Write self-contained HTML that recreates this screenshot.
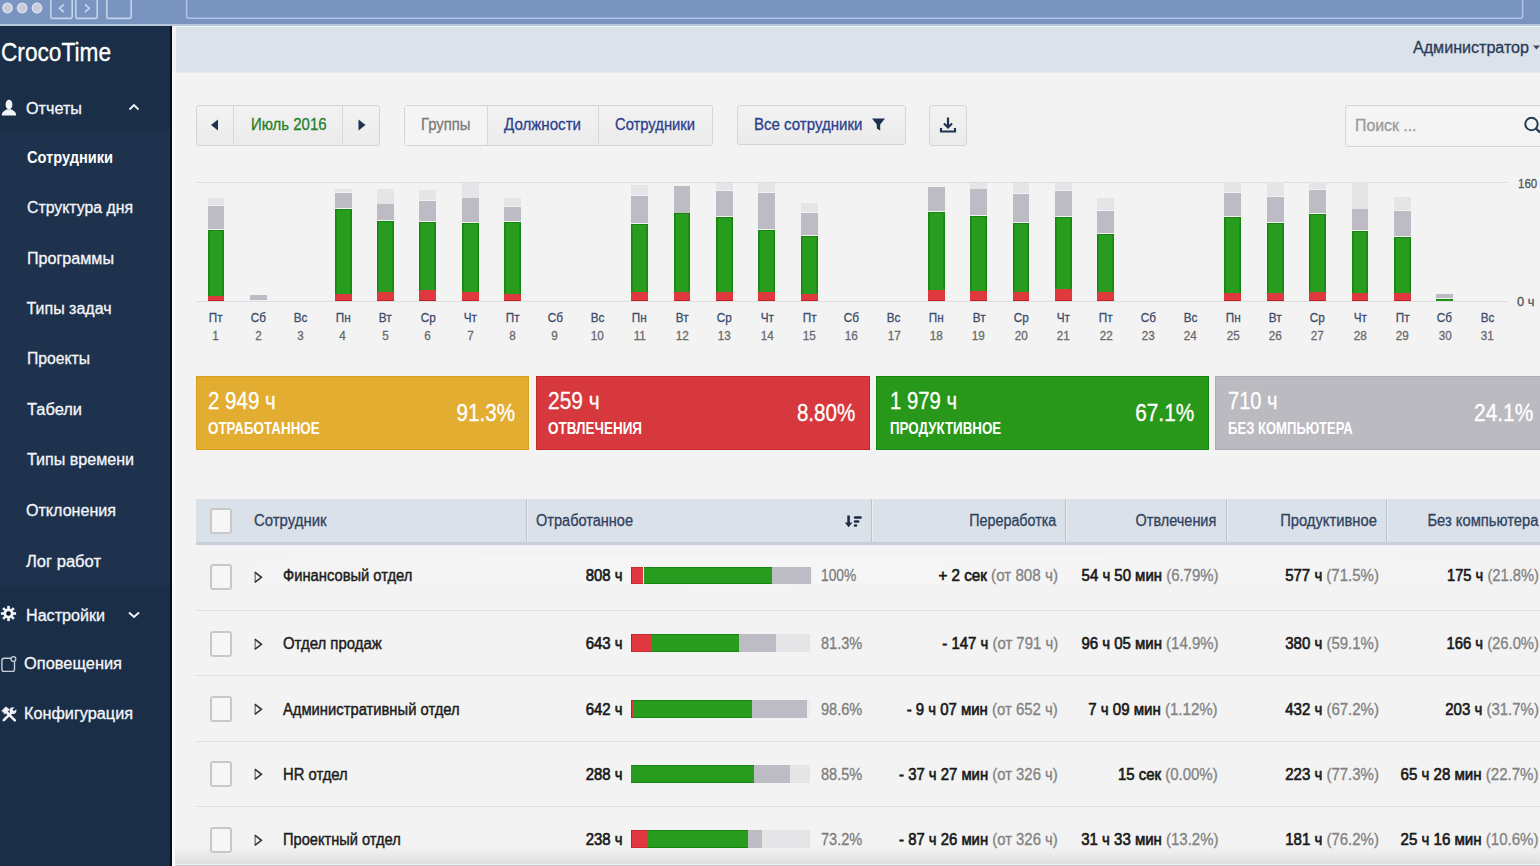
<!DOCTYPE html><html><head><meta charset="utf-8"><style>
html,body{margin:0;padding:0;width:1540px;height:866px;overflow:hidden;background:#f3f3f3;font-family:"Liberation Sans",sans-serif}
.t{position:absolute;white-space:nowrap;-webkit-text-stroke:0.3px currentColor}
.bl{display:inline-block;width:0;height:0;vertical-align:baseline}
</style></head><body>
<div style="position:absolute;left:172.00px;top:72.00px;width:1368.00px;height:794.00px;background:#f3f3f3;"></div>
<div style="position:absolute;left:172.00px;top:846.00px;width:1368.00px;height:18.00px;background:linear-gradient(#f3f3f300,#e0e0e0);"></div>
<div style="position:absolute;left:172.00px;top:864.00px;width:1368.00px;height:1.00px;background:#f1f1f3;"></div>
<div style="position:absolute;left:0.00px;top:865.00px;width:1540.00px;height:1.00px;background:#c9c9cd;"></div>
<div style="position:absolute;left:172.00px;top:72.00px;width:2.50px;height:794.00px;background:#f9f9fb;"></div>
<div style="position:absolute;left:0.00px;top:0.00px;width:1540.00px;height:25.00px;background:linear-gradient(#7a95bf,#7893bd);"></div>
<div style="position:absolute;left:0.00px;top:23.50px;width:1540.00px;height:2.00px;background:#b9c7db;"></div>
<svg style="position:absolute;left:0;top:0" width="1540" height="25">
<g fill="#c8ccd6" stroke="#dfe6f1" stroke-width="1.2"><circle cx="7.5" cy="8" r="4.8"/><circle cx="22.2" cy="8" r="4.8"/><circle cx="37" cy="8" r="4.8"/></g>
<g fill="none" stroke="#c5d3ea" stroke-width="1.6"><rect x="50.8" y="-3" width="21.4" height="21.4" rx="2"/><rect x="75.8" y="-3" width="21.4" height="21.4" rx="2"/><rect x="106.8" y="-3" width="24.4" height="21.4" rx="2"/>
<rect x="186.6" y="-3" width="1336" height="21.3" rx="2" stroke="#adc3ea"/>
<path d="M63.8 4.5 L59.5 8.3 L63.8 12" stroke-width="1.7"/><path d="M85 4.5 L89.3 8.3 L85 12" stroke-width="1.7"/></g>
</svg>
<div style="position:absolute;left:0.00px;top:25.50px;width:172.00px;height:840.50px;background:#1a2e47;"></div>
<div style="position:absolute;left:0.00px;top:131.00px;width:170.00px;height:455.70px;background:#1e324d;"></div>
<div style="position:absolute;left:169.80px;top:25.50px;width:2.20px;height:840.50px;background:#070d19;"></div>
<div style="position:absolute;left:172.00px;top:25.50px;width:1368.00px;height:47.00px;background:#dce2ea;"></div>
<div style="position:absolute;left:172.00px;top:25.50px;width:1368.00px;height:1.50px;background:#eef1f5;"></div>
<div style="position:absolute;left:172.00px;top:25.50px;width:4.00px;height:47.00px;background:#f1f2f4;"></div>
<div style="position:absolute;left:176.00px;top:71.50px;width:1364.00px;height:1.50px;background:#e6e9ee;"></div>
<svg style="position:absolute;left:0;top:95" width="172" height="640">
<g fill="#f2f4f8">
<ellipse cx="9" cy="9.6" rx="3.4" ry="4.9"/><path d="M1.8 20.4 C1.8 17 4.5 15.6 7.2 14.2 L10.8 14.2 C13.5 15.6 16.2 17 16.2 20.4 Z"/>
</g>
<path d="M129.5 14.5 L134 10 L138.5 14.5" fill="none" stroke="#f2f4f8" stroke-width="1.8"/>
<path d="M129 517.5 L134 522 L139 517.5" fill="none" stroke="#f2f4f8" stroke-width="2"/>
</svg>
<svg style="position:absolute;left:0px;top:605.3px" width="17" height="17" viewBox="-8.5 -8.5 17 17"><g fill="#f2f4f8">
<circle r="5"/><rect x="-1.3" y="-7.6" width="2.6" height="4" transform="rotate(0)"/><rect x="-1.3" y="-7.6" width="2.6" height="4" transform="rotate(45)"/><rect x="-1.3" y="-7.6" width="2.6" height="4" transform="rotate(90)"/><rect x="-1.3" y="-7.6" width="2.6" height="4" transform="rotate(135)"/><rect x="-1.3" y="-7.6" width="2.6" height="4" transform="rotate(180)"/><rect x="-1.3" y="-7.6" width="2.6" height="4" transform="rotate(225)"/><rect x="-1.3" y="-7.6" width="2.6" height="4" transform="rotate(270)"/><rect x="-1.3" y="-7.6" width="2.6" height="4" transform="rotate(315)"/></g><circle r="2.3" fill="#0d1524"/></svg>
<svg style="position:absolute;left:0px;top:655px" width="18" height="18"><rect x="1.9" y="3.2" width="12.6" height="13.2" rx="2.2" fill="none" stroke="#c9ced8" stroke-width="1.4"/><circle cx="13.4" cy="4" r="2.4" fill="#1a2e47" stroke="#c9ced8" stroke-width="1.3"/></svg>
<svg style="position:absolute;left:1px;top:706px" width="17" height="17"><g fill="#f2f4f8" stroke="#f2f4f8" stroke-linecap="round">
<path d="M6 6.5 L13.8 14.3" stroke-width="2.6"/><path d="M0.8 4.8 L4.8 0.8 L8.6 3.6 L4.2 8 Z" stroke-width="0.5"/>
<path d="M2.8 14.2 L10.2 6.8" stroke-width="2.6"/><circle cx="12" cy="4.6" r="3.4" stroke="none"/></g>
<path d="M12.2 4.4 L16 0.6" stroke="#1a2e47" stroke-width="2.4"/></svg>
<svg style="position:absolute;left:1532px;top:44px" width="10" height="8"><path d="M1 1.5 H8 L4.5 5.5 Z" fill="#3a4a66"/></svg>
<div style="position:absolute;left:196.00px;top:104.50px;width:183.50px;height:41.00px;background:#eee;background:linear-gradient(#f2f2f2,#ebebeb);border:1px solid #d5d5d5;border-radius:3px;box-sizing:border-box;"></div>
<div style="position:absolute;left:232.50px;top:105.00px;width:1.00px;height:40.00px;background:#d8d8d8;"></div>
<div style="position:absolute;left:342.00px;top:105.00px;width:1.00px;height:40.00px;background:#d8d8d8;"></div>
<svg style="position:absolute;left:205px;top:115px" width="20" height="20"><path d="M13 4.5 V15.5 L6 10 Z" fill="#1e3350"/></svg>
<svg style="position:absolute;left:352px;top:115px" width="20" height="20"><path d="M6.5 4.5 V15.5 L13.5 10 Z" fill="#1e3350"/></svg>
<div style="position:absolute;left:404.00px;top:104.50px;width:308.50px;height:41.00px;background:#ececec;background:linear-gradient(#f2f2f2,#ebebeb);border:1px solid #d5d5d5;border-radius:3px;box-sizing:border-box;"></div>
<div style="position:absolute;left:405.00px;top:105.50px;width:82.00px;height:39.00px;background:#f4f4f4;"></div>
<div style="position:absolute;left:487.00px;top:105.00px;width:1.00px;height:40.00px;background:#d8d8d8;"></div>
<div style="position:absolute;left:597.50px;top:105.00px;width:1.00px;height:40.00px;background:#d8d8d8;"></div>
<div style="position:absolute;left:736.50px;top:104.50px;width:169.50px;height:40.50px;background:#eee;background:linear-gradient(#f2f2f2,#ebebeb);border:1px solid #d5d5d5;border-radius:3px;box-sizing:border-box;"></div>
<svg style="position:absolute;left:870px;top:116px" width="18" height="17"><path d="M2 2.5 H15 L10.2 8.5 V14.5 L6.8 12.5 V8.5 Z" fill="#1e3350"/></svg>
<div style="position:absolute;left:929.00px;top:104.50px;width:37.50px;height:41.00px;background:#eee;background:linear-gradient(#f2f2f2,#ebebeb);border:1px solid #d5d5d5;border-radius:3px;box-sizing:border-box;"></div>
<svg style="position:absolute;left:938px;top:115px" width="20" height="20"><g fill="none" stroke="#1e3350" stroke-width="2.2"><path d="M10 2.5 V12"/><path d="M6 8.5 L10 12.5 L14 8.5"/><path d="M3 13 V16.5 H17 V13"/></g></svg>
<div style="position:absolute;left:1344.50px;top:104.50px;width:215.50px;height:42.00px;background:#f4f4f4;border:1px solid #d4d4d4;border-radius:3px;box-sizing:border-box;"></div>
<svg style="position:absolute;left:1520px;top:114px" width="20" height="20"><circle cx="11.5" cy="10" r="6.2" fill="none" stroke="#2a3a55" stroke-width="2"/><path d="M16 14.5 L20 18.5" stroke="#2a3a55" stroke-width="2.4"/></svg>
<div style="position:absolute;left:196.00px;top:181.50px;width:1311.50px;height:1.00px;background:#dcdde0;"></div>
<div style="position:absolute;left:196.00px;top:300.50px;width:1311.50px;height:1.00px;background:#dcdde0;"></div>
<div style="position:absolute;left:207.60px;top:198.00px;width:16.80px;height:7.00px;background:#e5e5e7;"></div>
<div style="position:absolute;left:207.60px;top:205.80px;width:16.80px;height:23.10px;background:#bdbbc3;"></div>
<div style="position:absolute;left:207.60px;top:229.70px;width:16.80px;height:66.50px;background:#289c1e;box-shadow:inset 1.5px 0 #15850d,inset -1.5px 0 #15850d,inset 0 1px #15850d;"></div>
<div style="position:absolute;left:207.60px;top:296.20px;width:16.80px;height:4.80px;background:#e0383f;box-shadow:inset 0 -1px #c41e26;"></div>
<div style="position:absolute;left:249.97px;top:295.40px;width:16.80px;height:4.80px;background:#bdbbc3;"></div>
<div style="position:absolute;left:334.71px;top:188.50px;width:16.80px;height:3.70px;background:#e5e5e7;"></div>
<div style="position:absolute;left:334.71px;top:193.00px;width:16.80px;height:15.40px;background:#bdbbc3;"></div>
<div style="position:absolute;left:334.71px;top:209.20px;width:16.80px;height:84.70px;background:#289c1e;box-shadow:inset 1.5px 0 #15850d,inset -1.5px 0 #15850d,inset 0 1px #15850d;"></div>
<div style="position:absolute;left:334.71px;top:293.90px;width:16.80px;height:7.10px;background:#e0383f;box-shadow:inset 0 -1px #c41e26;"></div>
<div style="position:absolute;left:377.08px;top:188.50px;width:16.80px;height:15.00px;background:#e5e5e7;"></div>
<div style="position:absolute;left:377.08px;top:204.30px;width:16.80px;height:15.70px;background:#bdbbc3;"></div>
<div style="position:absolute;left:377.08px;top:220.80px;width:16.80px;height:71.00px;background:#289c1e;box-shadow:inset 1.5px 0 #15850d,inset -1.5px 0 #15850d,inset 0 1px #15850d;"></div>
<div style="position:absolute;left:377.08px;top:291.80px;width:16.80px;height:9.20px;background:#e0383f;box-shadow:inset 0 -1px #c41e26;"></div>
<div style="position:absolute;left:419.45px;top:189.60px;width:16.80px;height:10.10px;background:#e5e5e7;"></div>
<div style="position:absolute;left:419.45px;top:200.50px;width:16.80px;height:20.70px;background:#bdbbc3;"></div>
<div style="position:absolute;left:419.45px;top:222.00px;width:16.80px;height:68.10px;background:#289c1e;box-shadow:inset 1.5px 0 #15850d,inset -1.5px 0 #15850d,inset 0 1px #15850d;"></div>
<div style="position:absolute;left:419.45px;top:290.10px;width:16.80px;height:10.90px;background:#e0383f;box-shadow:inset 0 -1px #c41e26;"></div>
<div style="position:absolute;left:461.82px;top:182.50px;width:16.80px;height:15.00px;background:#e5e5e7;"></div>
<div style="position:absolute;left:461.82px;top:198.30px;width:16.80px;height:23.90px;background:#bdbbc3;"></div>
<div style="position:absolute;left:461.82px;top:223.00px;width:16.80px;height:69.40px;background:#289c1e;box-shadow:inset 1.5px 0 #15850d,inset -1.5px 0 #15850d,inset 0 1px #15850d;"></div>
<div style="position:absolute;left:461.82px;top:292.40px;width:16.80px;height:8.60px;background:#e0383f;box-shadow:inset 0 -1px #c41e26;"></div>
<div style="position:absolute;left:504.19px;top:198.30px;width:16.80px;height:7.70px;background:#e5e5e7;"></div>
<div style="position:absolute;left:504.19px;top:206.80px;width:16.80px;height:14.20px;background:#bdbbc3;"></div>
<div style="position:absolute;left:504.19px;top:221.80px;width:16.80px;height:72.10px;background:#289c1e;box-shadow:inset 1.5px 0 #15850d,inset -1.5px 0 #15850d,inset 0 1px #15850d;"></div>
<div style="position:absolute;left:504.19px;top:293.90px;width:16.80px;height:7.10px;background:#e0383f;box-shadow:inset 0 -1px #c41e26;"></div>
<div style="position:absolute;left:631.30px;top:184.80px;width:16.80px;height:10.10px;background:#e5e5e7;"></div>
<div style="position:absolute;left:631.30px;top:195.70px;width:16.80px;height:27.30px;background:#bdbbc3;"></div>
<div style="position:absolute;left:631.30px;top:223.80px;width:16.80px;height:68.30px;background:#289c1e;box-shadow:inset 1.5px 0 #15850d,inset -1.5px 0 #15850d,inset 0 1px #15850d;"></div>
<div style="position:absolute;left:631.30px;top:292.10px;width:16.80px;height:8.90px;background:#e0383f;box-shadow:inset 0 -1px #c41e26;"></div>
<div style="position:absolute;left:673.67px;top:185.50px;width:16.80px;height:27.00px;background:#bdbbc3;"></div>
<div style="position:absolute;left:673.67px;top:213.30px;width:16.80px;height:78.50px;background:#289c1e;box-shadow:inset 1.5px 0 #15850d,inset -1.5px 0 #15850d,inset 0 1px #15850d;"></div>
<div style="position:absolute;left:673.67px;top:291.80px;width:16.80px;height:9.20px;background:#e0383f;box-shadow:inset 0 -1px #c41e26;"></div>
<div style="position:absolute;left:716.04px;top:182.50px;width:16.80px;height:7.20px;background:#e5e5e7;"></div>
<div style="position:absolute;left:716.04px;top:190.50px;width:16.80px;height:25.70px;background:#bdbbc3;"></div>
<div style="position:absolute;left:716.04px;top:217.00px;width:16.80px;height:75.40px;background:#289c1e;box-shadow:inset 1.5px 0 #15850d,inset -1.5px 0 #15850d,inset 0 1px #15850d;"></div>
<div style="position:absolute;left:716.04px;top:292.40px;width:16.80px;height:8.60px;background:#e0383f;box-shadow:inset 0 -1px #c41e26;"></div>
<div style="position:absolute;left:758.41px;top:182.50px;width:16.80px;height:9.70px;background:#e5e5e7;"></div>
<div style="position:absolute;left:758.41px;top:193.00px;width:16.80px;height:35.70px;background:#bdbbc3;"></div>
<div style="position:absolute;left:758.41px;top:229.50px;width:16.80px;height:62.90px;background:#289c1e;box-shadow:inset 1.5px 0 #15850d,inset -1.5px 0 #15850d,inset 0 1px #15850d;"></div>
<div style="position:absolute;left:758.41px;top:292.40px;width:16.80px;height:8.60px;background:#e0383f;box-shadow:inset 0 -1px #c41e26;"></div>
<div style="position:absolute;left:800.78px;top:203.20px;width:16.80px;height:9.30px;background:#e5e5e7;"></div>
<div style="position:absolute;left:800.78px;top:213.30px;width:16.80px;height:21.70px;background:#bdbbc3;"></div>
<div style="position:absolute;left:800.78px;top:235.80px;width:16.80px;height:58.10px;background:#289c1e;box-shadow:inset 1.5px 0 #15850d,inset -1.5px 0 #15850d,inset 0 1px #15850d;"></div>
<div style="position:absolute;left:800.78px;top:293.90px;width:16.80px;height:7.10px;background:#e0383f;box-shadow:inset 0 -1px #c41e26;"></div>
<div style="position:absolute;left:927.89px;top:186.70px;width:16.80px;height:24.30px;background:#bdbbc3;"></div>
<div style="position:absolute;left:927.89px;top:211.80px;width:16.80px;height:78.00px;background:#289c1e;box-shadow:inset 1.5px 0 #15850d,inset -1.5px 0 #15850d,inset 0 1px #15850d;"></div>
<div style="position:absolute;left:927.89px;top:289.80px;width:16.80px;height:11.20px;background:#e0383f;box-shadow:inset 0 -1px #c41e26;"></div>
<div style="position:absolute;left:970.26px;top:182.50px;width:16.80px;height:6.00px;background:#e5e5e7;"></div>
<div style="position:absolute;left:970.26px;top:189.30px;width:16.80px;height:25.40px;background:#bdbbc3;"></div>
<div style="position:absolute;left:970.26px;top:215.50px;width:16.80px;height:75.80px;background:#289c1e;box-shadow:inset 1.5px 0 #15850d,inset -1.5px 0 #15850d,inset 0 1px #15850d;"></div>
<div style="position:absolute;left:970.26px;top:291.30px;width:16.80px;height:9.70px;background:#e0383f;box-shadow:inset 0 -1px #c41e26;"></div>
<div style="position:absolute;left:1012.63px;top:182.50px;width:16.80px;height:10.90px;background:#e5e5e7;"></div>
<div style="position:absolute;left:1012.63px;top:194.20px;width:16.80px;height:28.00px;background:#bdbbc3;"></div>
<div style="position:absolute;left:1012.63px;top:223.00px;width:16.80px;height:68.80px;background:#289c1e;box-shadow:inset 1.5px 0 #15850d,inset -1.5px 0 #15850d,inset 0 1px #15850d;"></div>
<div style="position:absolute;left:1012.63px;top:291.80px;width:16.80px;height:9.20px;background:#e0383f;box-shadow:inset 0 -1px #c41e26;"></div>
<div style="position:absolute;left:1055.00px;top:182.50px;width:16.80px;height:7.20px;background:#e5e5e7;"></div>
<div style="position:absolute;left:1055.00px;top:190.50px;width:16.80px;height:25.70px;background:#bdbbc3;"></div>
<div style="position:absolute;left:1055.00px;top:217.00px;width:16.80px;height:71.80px;background:#289c1e;box-shadow:inset 1.5px 0 #15850d,inset -1.5px 0 #15850d,inset 0 1px #15850d;"></div>
<div style="position:absolute;left:1055.00px;top:288.80px;width:16.80px;height:12.20px;background:#e0383f;box-shadow:inset 0 -1px #c41e26;"></div>
<div style="position:absolute;left:1097.37px;top:198.30px;width:16.80px;height:11.60px;background:#e5e5e7;"></div>
<div style="position:absolute;left:1097.37px;top:210.70px;width:16.80px;height:22.80px;background:#bdbbc3;"></div>
<div style="position:absolute;left:1097.37px;top:234.30px;width:16.80px;height:58.10px;background:#289c1e;box-shadow:inset 1.5px 0 #15850d,inset -1.5px 0 #15850d,inset 0 1px #15850d;"></div>
<div style="position:absolute;left:1097.37px;top:292.40px;width:16.80px;height:8.60px;background:#e0383f;box-shadow:inset 0 -1px #c41e26;"></div>
<div style="position:absolute;left:1224.48px;top:182.30px;width:16.80px;height:10.10px;background:#e5e5e7;"></div>
<div style="position:absolute;left:1224.48px;top:193.20px;width:16.80px;height:22.90px;background:#bdbbc3;"></div>
<div style="position:absolute;left:1224.48px;top:216.90px;width:16.80px;height:75.80px;background:#289c1e;box-shadow:inset 1.5px 0 #15850d,inset -1.5px 0 #15850d,inset 0 1px #15850d;"></div>
<div style="position:absolute;left:1224.48px;top:292.70px;width:16.80px;height:8.30px;background:#e0383f;box-shadow:inset 0 -1px #c41e26;"></div>
<div style="position:absolute;left:1266.85px;top:182.30px;width:16.80px;height:13.80px;background:#e5e5e7;"></div>
<div style="position:absolute;left:1266.85px;top:196.90px;width:16.80px;height:25.50px;background:#bdbbc3;"></div>
<div style="position:absolute;left:1266.85px;top:223.20px;width:16.80px;height:69.50px;background:#289c1e;box-shadow:inset 1.5px 0 #15850d,inset -1.5px 0 #15850d,inset 0 1px #15850d;"></div>
<div style="position:absolute;left:1266.85px;top:292.70px;width:16.80px;height:8.30px;background:#e0383f;box-shadow:inset 0 -1px #c41e26;"></div>
<div style="position:absolute;left:1309.22px;top:182.30px;width:16.80px;height:6.50px;background:#e5e5e7;"></div>
<div style="position:absolute;left:1309.22px;top:189.60px;width:16.80px;height:23.90px;background:#bdbbc3;"></div>
<div style="position:absolute;left:1309.22px;top:214.30px;width:16.80px;height:77.30px;background:#289c1e;box-shadow:inset 1.5px 0 #15850d,inset -1.5px 0 #15850d,inset 0 1px #15850d;"></div>
<div style="position:absolute;left:1309.22px;top:291.60px;width:16.80px;height:9.40px;background:#e0383f;box-shadow:inset 0 -1px #c41e26;"></div>
<div style="position:absolute;left:1351.59px;top:182.30px;width:16.80px;height:26.30px;background:#e5e5e7;"></div>
<div style="position:absolute;left:1351.59px;top:209.40px;width:16.80px;height:20.50px;background:#bdbbc3;"></div>
<div style="position:absolute;left:1351.59px;top:230.70px;width:16.80px;height:62.00px;background:#289c1e;box-shadow:inset 1.5px 0 #15850d,inset -1.5px 0 #15850d,inset 0 1px #15850d;"></div>
<div style="position:absolute;left:1351.59px;top:292.70px;width:16.80px;height:8.30px;background:#e0383f;box-shadow:inset 0 -1px #c41e26;"></div>
<div style="position:absolute;left:1393.96px;top:196.90px;width:16.80px;height:13.00px;background:#e5e5e7;"></div>
<div style="position:absolute;left:1393.96px;top:210.70px;width:16.80px;height:25.50px;background:#bdbbc3;"></div>
<div style="position:absolute;left:1393.96px;top:237.00px;width:16.80px;height:55.70px;background:#289c1e;box-shadow:inset 1.5px 0 #15850d,inset -1.5px 0 #15850d,inset 0 1px #15850d;"></div>
<div style="position:absolute;left:1393.96px;top:292.70px;width:16.80px;height:8.30px;background:#e0383f;box-shadow:inset 0 -1px #c41e26;"></div>
<div style="position:absolute;left:1436.33px;top:294.30px;width:16.80px;height:4.10px;background:#bdbbc3;"></div>
<div style="position:absolute;left:1436.33px;top:299.20px;width:16.80px;height:1.80px;background:#289c1e;box-shadow:inset 1.5px 0 #15850d,inset -1.5px 0 #15850d,inset 0 1px #15850d;"></div>
<div style="position:absolute;left:195.60px;top:376.20px;width:333.90px;height:74.10px;background:#e3ad31;border:1px solid #d9a020;box-sizing:border-box;"></div>
<div style="position:absolute;left:536.00px;top:376.20px;width:333.50px;height:74.10px;background:#d6383d;border:1px solid #c8252c;box-sizing:border-box;"></div>
<div style="position:absolute;left:876.00px;top:376.20px;width:332.50px;height:74.10px;background:#279819;border:1px solid #15870e;box-sizing:border-box;"></div>
<div style="position:absolute;left:1214.80px;top:376.20px;width:330.20px;height:74.10px;background:#bcbac1;border:1px solid #adabb3;box-sizing:border-box;"></div>
<div style="position:absolute;left:195.50px;top:498.50px;width:1344.50px;height:45.00px;background:#dbe1e9;"></div>
<div style="position:absolute;left:195.50px;top:542.00px;width:1344.50px;height:2.50px;background:#c5cfdc;"></div>
<div style="position:absolute;left:526.00px;top:499.00px;width:1.00px;height:43.00px;background:#b9c4d3;"></div>
<div style="position:absolute;left:527.00px;top:499.00px;width:1.00px;height:43.00px;background:#eaeef3;"></div>
<div style="position:absolute;left:870.50px;top:499.00px;width:1.00px;height:43.00px;background:#b9c4d3;"></div>
<div style="position:absolute;left:871.50px;top:499.00px;width:1.00px;height:43.00px;background:#eaeef3;"></div>
<div style="position:absolute;left:1064.70px;top:499.00px;width:1.00px;height:43.00px;background:#b9c4d3;"></div>
<div style="position:absolute;left:1065.70px;top:499.00px;width:1.00px;height:43.00px;background:#eaeef3;"></div>
<div style="position:absolute;left:1225.70px;top:499.00px;width:1.00px;height:43.00px;background:#b9c4d3;"></div>
<div style="position:absolute;left:1226.70px;top:499.00px;width:1.00px;height:43.00px;background:#eaeef3;"></div>
<div style="position:absolute;left:1386.00px;top:499.00px;width:1.00px;height:43.00px;background:#b9c4d3;"></div>
<div style="position:absolute;left:1387.00px;top:499.00px;width:1.00px;height:43.00px;background:#eaeef3;"></div>
<div style="position:absolute;left:209.5px;top:508.0px;width:18px;height:22px;border:2px solid #c8c8c8;border-radius:3px;background:#f6f6f6;box-sizing:content-box"></div>
<svg style="position:absolute;left:844px;top:515px" width="22" height="14"><g fill="#1d2c47"><path d="M3.3 0.5 H5.9 V7.5 H8.4 L4.6 12.2 L0.8 7.5 H3.3 Z"/><rect x="9.8" y="1.2" width="8" height="2.6" rx="1.2"/><rect x="9.8" y="5.2" width="5.6" height="2.6" rx="1.2"/><rect x="9.8" y="9.2" width="3.4" height="2.6" rx="1.2"/></g></svg>
<div style="position:absolute;left:195.50px;top:555.00px;width:1344.50px;height:30.00px;background:linear-gradient(90deg,#f3f3f3,#f6f6f6 40%,#f3f3f3);"></div>
<div style="position:absolute;left:195.50px;top:609.80px;width:1344.50px;height:1.50px;background:#dfe0e4;"></div>
<div style="position:absolute;left:195.50px;top:674.50px;width:1344.50px;height:1.50px;background:#dfe0e4;"></div>
<div style="position:absolute;left:195.50px;top:740.50px;width:1344.50px;height:1.50px;background:#dfe0e4;"></div>
<div style="position:absolute;left:195.50px;top:805.90px;width:1344.50px;height:1.50px;background:#dfe0e4;"></div>
<div style="position:absolute;left:209.5px;top:564.0px;width:18px;height:22px;border:2px solid #c8c8c8;border-radius:3px;background:#f6f6f6;box-sizing:content-box"></div>
<div style="position:absolute;left:209.5px;top:630.5px;width:18px;height:22px;border:2px solid #c8c8c8;border-radius:3px;background:#f6f6f6;box-sizing:content-box"></div>
<div style="position:absolute;left:209.5px;top:695.5px;width:18px;height:22px;border:2px solid #c8c8c8;border-radius:3px;background:#f6f6f6;box-sizing:content-box"></div>
<div style="position:absolute;left:209.5px;top:761.0px;width:18px;height:22px;border:2px solid #c8c8c8;border-radius:3px;background:#f6f6f6;box-sizing:content-box"></div>
<div style="position:absolute;left:209.5px;top:827.0px;width:18px;height:22px;border:2px solid #c8c8c8;border-radius:3px;background:#f6f6f6;box-sizing:content-box"></div>
<svg style="position:absolute;left:252.5px;top:570.5px" width="10" height="13" viewBox="0 0 10 13"><path d="M2.2 1.8 V11" stroke="#777" stroke-width="1.3"/><path d="M1.8 1.2 L8.4 6.3 L1.8 11.4" fill="none" stroke="#333" stroke-width="1.6" stroke-linejoin="miter"/></svg>
<svg style="position:absolute;left:252.5px;top:637.5px" width="10" height="13" viewBox="0 0 10 13"><path d="M2.2 1.8 V11" stroke="#777" stroke-width="1.3"/><path d="M1.8 1.2 L8.4 6.3 L1.8 11.4" fill="none" stroke="#333" stroke-width="1.6" stroke-linejoin="miter"/></svg>
<svg style="position:absolute;left:252.5px;top:702.5px" width="10" height="13" viewBox="0 0 10 13"><path d="M2.2 1.8 V11" stroke="#777" stroke-width="1.3"/><path d="M1.8 1.2 L8.4 6.3 L1.8 11.4" fill="none" stroke="#333" stroke-width="1.6" stroke-linejoin="miter"/></svg>
<svg style="position:absolute;left:252.5px;top:768px" width="10" height="13" viewBox="0 0 10 13"><path d="M2.2 1.8 V11" stroke="#777" stroke-width="1.3"/><path d="M1.8 1.2 L8.4 6.3 L1.8 11.4" fill="none" stroke="#333" stroke-width="1.6" stroke-linejoin="miter"/></svg>
<svg style="position:absolute;left:252.5px;top:833.5px" width="10" height="13" viewBox="0 0 10 13"><path d="M2.2 1.8 V11" stroke="#777" stroke-width="1.3"/><path d="M1.8 1.2 L8.4 6.3 L1.8 11.4" fill="none" stroke="#333" stroke-width="1.6" stroke-linejoin="miter"/></svg>
<div style="position:absolute;left:631.40px;top:566.70px;width:12.10px;height:17.10px;background:#e0383f;box-shadow:inset 1px 0 #c41e26,inset 0 1px #d02a35,inset 0 -1px #d02a35;"></div>
<div style="position:absolute;left:643.50px;top:566.70px;width:128.40px;height:17.10px;background:#289c1e;box-shadow:inset 0 1px #15850d,inset 0 -1px #15850d;"></div>
<div style="position:absolute;left:771.90px;top:566.70px;width:39.10px;height:17.10px;background:#bdbbc3;"></div>
<div style="position:absolute;left:811.00px;top:566.70px;width:0.80px;height:17.10px;background:#f0f0f0;"></div>
<div style="position:absolute;left:631.40px;top:634.10px;width:20.50px;height:18.10px;background:#e0383f;box-shadow:inset 1px 0 #c41e26,inset 0 1px #d02a35,inset 0 -1px #d02a35;"></div>
<div style="position:absolute;left:651.90px;top:634.10px;width:87.10px;height:18.10px;background:#289c1e;box-shadow:inset 0 1px #15850d,inset 0 -1px #15850d;"></div>
<div style="position:absolute;left:739.00px;top:634.10px;width:37.30px;height:18.10px;background:#bdbbc3;"></div>
<div style="position:absolute;left:776.30px;top:634.10px;width:0.80px;height:18.10px;background:#f0f0f0;"></div>
<div style="position:absolute;left:776.30px;top:634.10px;width:33.70px;height:18.10px;background:#e5e5e7;"></div>
<div style="position:absolute;left:631.40px;top:699.50px;width:1.40px;height:18.10px;background:#e0383f;box-shadow:inset 1px 0 #c41e26,inset 0 1px #d02a35,inset 0 -1px #d02a35;"></div>
<div style="position:absolute;left:632.80px;top:699.50px;width:119.00px;height:18.10px;background:#289c1e;box-shadow:inset 0 1px #15850d,inset 0 -1px #15850d;"></div>
<div style="position:absolute;left:751.80px;top:699.50px;width:55.20px;height:18.10px;background:#bdbbc3;"></div>
<div style="position:absolute;left:807.00px;top:699.50px;width:0.80px;height:18.10px;background:#f0f0f0;"></div>
<div style="position:absolute;left:807.00px;top:699.50px;width:3.00px;height:18.10px;background:#ececec;"></div>
<div style="position:absolute;left:631.40px;top:765.10px;width:122.40px;height:17.70px;background:#289c1e;box-shadow:inset 0 1px #15850d,inset 0 -1px #15850d;"></div>
<div style="position:absolute;left:753.80px;top:765.10px;width:36.00px;height:17.70px;background:#bdbbc3;"></div>
<div style="position:absolute;left:789.80px;top:765.10px;width:0.80px;height:17.70px;background:#f0f0f0;"></div>
<div style="position:absolute;left:789.80px;top:765.10px;width:20.20px;height:17.70px;background:#e5e5e7;"></div>
<div style="position:absolute;left:631.40px;top:830.10px;width:16.50px;height:18.10px;background:#e0383f;box-shadow:inset 1px 0 #c41e26,inset 0 1px #d02a35,inset 0 -1px #d02a35;"></div>
<div style="position:absolute;left:647.90px;top:830.10px;width:100.20px;height:18.10px;background:#289c1e;box-shadow:inset 0 1px #15850d,inset 0 -1px #15850d;"></div>
<div style="position:absolute;left:748.10px;top:830.10px;width:13.50px;height:18.10px;background:#bdbbc3;"></div>
<div style="position:absolute;left:761.60px;top:830.10px;width:0.80px;height:18.10px;background:#f0f0f0;"></div>
<div style="position:absolute;left:761.60px;top:830.10px;width:48.40px;height:18.10px;background:#e5e5e7;"></div>
<div class="t" id="t0" style="left:0.50px;top:38.50px;font-size:26px;line-height:26px;color:#ffffff;transform:scaleX(0.8718);transform-origin:0 0;">CrocoTime<i class="bl"></i></div>
<div class="t" id="t1" style="left:25.50px;top:100.50px;font-size:16px;line-height:16px;color:#f4f6fa;transform:scaleX(1.0124);transform-origin:0 0;">Отчеты<i class="bl"></i></div>
<div class="t" id="t2" style="left:26.50px;top:149.60px;font-size:16px;line-height:16px;color:#ffffff;font-weight:700;-webkit-text-stroke:0;transform:scaleX(0.9117);transform-origin:0 0;">Сотрудники<i class="bl"></i></div>
<div class="t" id="t3" style="left:26.50px;top:200.40px;font-size:16px;line-height:16px;color:#f4f6fa;transform:scaleX(0.9889);transform-origin:0 0;">Структура дня<i class="bl"></i></div>
<div class="t" id="t4" style="left:26.50px;top:250.60px;font-size:16px;line-height:16px;color:#f4f6fa;transform:scaleX(1.0065);transform-origin:0 0;">Программы<i class="bl"></i></div>
<div class="t" id="t5" style="left:26.50px;top:301.00px;font-size:16px;line-height:16px;color:#f4f6fa;">Типы задач<i class="bl"></i></div>
<div class="t" id="t6" style="left:26.50px;top:351.30px;font-size:16px;line-height:16px;color:#f4f6fa;transform:scaleX(0.9813);transform-origin:0 0;">Проекты<i class="bl"></i></div>
<div class="t" id="t7" style="left:26.50px;top:401.80px;font-size:16px;line-height:16px;color:#f4f6fa;transform:scaleX(1.0265);transform-origin:0 0;">Табели<i class="bl"></i></div>
<div class="t" id="t8" style="left:26.50px;top:452.10px;font-size:16px;line-height:16px;color:#f4f6fa;transform:scaleX(1.0038);transform-origin:0 0;">Типы времени<i class="bl"></i></div>
<div class="t" id="t9" style="left:25.50px;top:503.20px;font-size:16px;line-height:16px;color:#f4f6fa;transform:scaleX(1.0051);transform-origin:0 0;">Отклонения<i class="bl"></i></div>
<div class="t" id="t10" style="left:25.50px;top:553.80px;font-size:16px;line-height:16px;color:#f4f6fa;transform:scaleX(1.0343);transform-origin:0 0;">Лог работ<i class="bl"></i></div>
<div class="t" id="t11" style="left:25.50px;top:607.80px;font-size:16px;line-height:16px;color:#f4f6fa;transform:scaleX(1.0070);transform-origin:0 0;">Настройки<i class="bl"></i></div>
<div class="t" id="t12" style="left:23.50px;top:655.80px;font-size:16px;line-height:16px;color:#f4f6fa;transform:scaleX(1.0257);transform-origin:0 0;">Оповещения<i class="bl"></i></div>
<div class="t" id="t13" style="left:23.50px;top:706.00px;font-size:16px;line-height:16px;color:#f4f6fa;transform:scaleX(1.0151);transform-origin:0 0;">Конфигурация<i class="bl"></i></div>
<div class="t" id="t14" style="left:1413.10px;top:39.80px;font-size:16px;line-height:16px;color:#2a3b58;transform:scaleX(1.0049);transform-origin:0 0;">Администратор<i class="bl"></i></div>
<div class="t" id="t15" style="left:250.50px;top:117.00px;font-size:16px;line-height:16px;color:#23802a;transform:scaleX(0.9337);transform-origin:0 0;">Июль 2016<i class="bl"></i></div>
<div class="t" id="t16" style="left:420.90px;top:116.80px;font-size:16px;line-height:16px;color:#7a7a7a;transform:scaleX(0.9285);transform-origin:0 0;">Группы<i class="bl"></i></div>
<div class="t" id="t17" style="left:503.80px;top:116.80px;font-size:16px;line-height:16px;color:#2d3f8c;transform:scaleX(0.9435);transform-origin:0 0;">Должности<i class="bl"></i></div>
<div class="t" id="t18" style="left:615.10px;top:116.80px;font-size:16px;line-height:16px;color:#2d3f8c;transform:scaleX(0.9230);transform-origin:0 0;">Сотрудники<i class="bl"></i></div>
<div class="t" id="t19" style="left:754.30px;top:117.10px;font-size:16px;line-height:16px;color:#2d3f8c;transform:scaleX(0.9409);transform-origin:0 0;">Все сотрудники<i class="bl"></i></div>
<div class="t" id="t20" style="left:1354.70px;top:118.00px;font-size:16px;line-height:16px;color:#9a9a9a;transform:scaleX(0.9899);transform-origin:0 0;">Поиск ...<i class="bl"></i></div>
<div class="t" id="t21" style="left:208.34px;top:310.50px;font-size:13px;line-height:13px;color:#3d4c6b;transform:scaleX(0.9000);transform-origin:50% 0;">Пт<i class="bl"></i></div>
<div class="t" id="t22" style="left:212.38px;top:329.40px;font-size:13px;line-height:13px;color:#6a6a6a;transform:scaleX(0.9000);transform-origin:50% 0;">1<i class="bl"></i></div>
<div class="t" id="t23" style="left:249.95px;top:310.50px;font-size:13px;line-height:13px;color:#3d4c6b;transform:scaleX(0.9000);transform-origin:50% 0;">Сб<i class="bl"></i></div>
<div class="t" id="t24" style="left:254.75px;top:329.40px;font-size:13px;line-height:13px;color:#6a6a6a;transform:scaleX(0.9000);transform-origin:50% 0;">2<i class="bl"></i></div>
<div class="t" id="t25" style="left:293.15px;top:310.50px;font-size:13px;line-height:13px;color:#3d4c6b;transform:scaleX(0.9000);transform-origin:50% 0;">Вс<i class="bl"></i></div>
<div class="t" id="t26" style="left:297.12px;top:329.40px;font-size:13px;line-height:13px;color:#6a6a6a;transform:scaleX(0.9000);transform-origin:50% 0;">3<i class="bl"></i></div>
<div class="t" id="t27" style="left:334.84px;top:310.50px;font-size:13px;line-height:13px;color:#3d4c6b;transform:scaleX(0.9000);transform-origin:50% 0;">Пн<i class="bl"></i></div>
<div class="t" id="t28" style="left:339.49px;top:329.40px;font-size:13px;line-height:13px;color:#6a6a6a;transform:scaleX(0.9000);transform-origin:50% 0;">4<i class="bl"></i></div>
<div class="t" id="t29" style="left:378.38px;top:310.50px;font-size:13px;line-height:13px;color:#3d4c6b;transform:scaleX(0.9000);transform-origin:50% 0;">Вт<i class="bl"></i></div>
<div class="t" id="t30" style="left:381.86px;top:329.40px;font-size:13px;line-height:13px;color:#6a6a6a;transform:scaleX(0.9000);transform-origin:50% 0;">5<i class="bl"></i></div>
<div class="t" id="t31" style="left:419.54px;top:310.50px;font-size:13px;line-height:13px;color:#3d4c6b;transform:scaleX(0.9000);transform-origin:50% 0;">Ср<i class="bl"></i></div>
<div class="t" id="t32" style="left:424.23px;top:329.40px;font-size:13px;line-height:13px;color:#6a6a6a;transform:scaleX(0.9000);transform-origin:50% 0;">6<i class="bl"></i></div>
<div class="t" id="t33" style="left:462.91px;top:310.50px;font-size:13px;line-height:13px;color:#3d4c6b;transform:scaleX(0.9000);transform-origin:50% 0;">Чт<i class="bl"></i></div>
<div class="t" id="t34" style="left:466.60px;top:329.40px;font-size:13px;line-height:13px;color:#6a6a6a;transform:scaleX(0.9000);transform-origin:50% 0;">7<i class="bl"></i></div>
<div class="t" id="t35" style="left:504.93px;top:310.50px;font-size:13px;line-height:13px;color:#3d4c6b;transform:scaleX(0.9000);transform-origin:50% 0;">Пт<i class="bl"></i></div>
<div class="t" id="t36" style="left:508.97px;top:329.40px;font-size:13px;line-height:13px;color:#6a6a6a;transform:scaleX(0.9000);transform-origin:50% 0;">8<i class="bl"></i></div>
<div class="t" id="t37" style="left:546.54px;top:310.50px;font-size:13px;line-height:13px;color:#3d4c6b;transform:scaleX(0.9000);transform-origin:50% 0;">Сб<i class="bl"></i></div>
<div class="t" id="t38" style="left:551.34px;top:329.40px;font-size:13px;line-height:13px;color:#6a6a6a;transform:scaleX(0.9000);transform-origin:50% 0;">9<i class="bl"></i></div>
<div class="t" id="t39" style="left:589.74px;top:310.50px;font-size:13px;line-height:13px;color:#3d4c6b;transform:scaleX(0.9000);transform-origin:50% 0;">Вс<i class="bl"></i></div>
<div class="t" id="t40" style="left:590.10px;top:329.40px;font-size:13px;line-height:13px;color:#6a6a6a;transform:scaleX(0.9000);transform-origin:50% 0;">10<i class="bl"></i></div>
<div class="t" id="t41" style="left:631.43px;top:310.50px;font-size:13px;line-height:13px;color:#3d4c6b;transform:scaleX(0.9000);transform-origin:50% 0;">Пн<i class="bl"></i></div>
<div class="t" id="t42" style="left:632.95px;top:329.40px;font-size:13px;line-height:13px;color:#6a6a6a;transform:scaleX(0.9000);transform-origin:50% 0;">11<i class="bl"></i></div>
<div class="t" id="t43" style="left:674.97px;top:310.50px;font-size:13px;line-height:13px;color:#3d4c6b;transform:scaleX(0.9000);transform-origin:50% 0;">Вт<i class="bl"></i></div>
<div class="t" id="t44" style="left:674.84px;top:329.40px;font-size:13px;line-height:13px;color:#6a6a6a;transform:scaleX(0.9000);transform-origin:50% 0;">12<i class="bl"></i></div>
<div class="t" id="t45" style="left:716.13px;top:310.50px;font-size:13px;line-height:13px;color:#3d4c6b;transform:scaleX(0.9000);transform-origin:50% 0;">Ср<i class="bl"></i></div>
<div class="t" id="t46" style="left:717.21px;top:329.40px;font-size:13px;line-height:13px;color:#6a6a6a;transform:scaleX(0.9000);transform-origin:50% 0;">13<i class="bl"></i></div>
<div class="t" id="t47" style="left:759.50px;top:310.50px;font-size:13px;line-height:13px;color:#3d4c6b;transform:scaleX(0.9000);transform-origin:50% 0;">Чт<i class="bl"></i></div>
<div class="t" id="t48" style="left:759.58px;top:329.40px;font-size:13px;line-height:13px;color:#6a6a6a;transform:scaleX(0.9000);transform-origin:50% 0;">14<i class="bl"></i></div>
<div class="t" id="t49" style="left:801.52px;top:310.50px;font-size:13px;line-height:13px;color:#3d4c6b;transform:scaleX(0.9000);transform-origin:50% 0;">Пт<i class="bl"></i></div>
<div class="t" id="t50" style="left:801.95px;top:329.40px;font-size:13px;line-height:13px;color:#6a6a6a;transform:scaleX(0.9000);transform-origin:50% 0;">15<i class="bl"></i></div>
<div class="t" id="t51" style="left:843.13px;top:310.50px;font-size:13px;line-height:13px;color:#3d4c6b;transform:scaleX(0.9000);transform-origin:50% 0;">Сб<i class="bl"></i></div>
<div class="t" id="t52" style="left:844.32px;top:329.40px;font-size:13px;line-height:13px;color:#6a6a6a;transform:scaleX(0.9000);transform-origin:50% 0;">16<i class="bl"></i></div>
<div class="t" id="t53" style="left:886.33px;top:310.50px;font-size:13px;line-height:13px;color:#3d4c6b;transform:scaleX(0.9000);transform-origin:50% 0;">Вс<i class="bl"></i></div>
<div class="t" id="t54" style="left:886.69px;top:329.40px;font-size:13px;line-height:13px;color:#6a6a6a;transform:scaleX(0.9000);transform-origin:50% 0;">17<i class="bl"></i></div>
<div class="t" id="t55" style="left:928.02px;top:310.50px;font-size:13px;line-height:13px;color:#3d4c6b;transform:scaleX(0.9000);transform-origin:50% 0;">Пн<i class="bl"></i></div>
<div class="t" id="t56" style="left:929.06px;top:329.40px;font-size:13px;line-height:13px;color:#6a6a6a;transform:scaleX(0.9000);transform-origin:50% 0;">18<i class="bl"></i></div>
<div class="t" id="t57" style="left:971.56px;top:310.50px;font-size:13px;line-height:13px;color:#3d4c6b;transform:scaleX(0.9000);transform-origin:50% 0;">Вт<i class="bl"></i></div>
<div class="t" id="t58" style="left:971.43px;top:329.40px;font-size:13px;line-height:13px;color:#6a6a6a;transform:scaleX(0.9000);transform-origin:50% 0;">19<i class="bl"></i></div>
<div class="t" id="t59" style="left:1012.72px;top:310.50px;font-size:13px;line-height:13px;color:#3d4c6b;transform:scaleX(0.9000);transform-origin:50% 0;">Ср<i class="bl"></i></div>
<div class="t" id="t60" style="left:1013.80px;top:329.40px;font-size:13px;line-height:13px;color:#6a6a6a;transform:scaleX(0.9000);transform-origin:50% 0;">20<i class="bl"></i></div>
<div class="t" id="t61" style="left:1056.09px;top:310.50px;font-size:13px;line-height:13px;color:#3d4c6b;transform:scaleX(0.9000);transform-origin:50% 0;">Чт<i class="bl"></i></div>
<div class="t" id="t62" style="left:1056.17px;top:329.40px;font-size:13px;line-height:13px;color:#6a6a6a;transform:scaleX(0.9000);transform-origin:50% 0;">21<i class="bl"></i></div>
<div class="t" id="t63" style="left:1098.11px;top:310.50px;font-size:13px;line-height:13px;color:#3d4c6b;transform:scaleX(0.9000);transform-origin:50% 0;">Пт<i class="bl"></i></div>
<div class="t" id="t64" style="left:1098.54px;top:329.40px;font-size:13px;line-height:13px;color:#6a6a6a;transform:scaleX(0.9000);transform-origin:50% 0;">22<i class="bl"></i></div>
<div class="t" id="t65" style="left:1139.72px;top:310.50px;font-size:13px;line-height:13px;color:#3d4c6b;transform:scaleX(0.9000);transform-origin:50% 0;">Сб<i class="bl"></i></div>
<div class="t" id="t66" style="left:1140.91px;top:329.40px;font-size:13px;line-height:13px;color:#6a6a6a;transform:scaleX(0.9000);transform-origin:50% 0;">23<i class="bl"></i></div>
<div class="t" id="t67" style="left:1182.92px;top:310.50px;font-size:13px;line-height:13px;color:#3d4c6b;transform:scaleX(0.9000);transform-origin:50% 0;">Вс<i class="bl"></i></div>
<div class="t" id="t68" style="left:1183.28px;top:329.40px;font-size:13px;line-height:13px;color:#6a6a6a;transform:scaleX(0.9000);transform-origin:50% 0;">24<i class="bl"></i></div>
<div class="t" id="t69" style="left:1224.61px;top:310.50px;font-size:13px;line-height:13px;color:#3d4c6b;transform:scaleX(0.9000);transform-origin:50% 0;">Пн<i class="bl"></i></div>
<div class="t" id="t70" style="left:1225.65px;top:329.40px;font-size:13px;line-height:13px;color:#6a6a6a;transform:scaleX(0.9000);transform-origin:50% 0;">25<i class="bl"></i></div>
<div class="t" id="t71" style="left:1268.15px;top:310.50px;font-size:13px;line-height:13px;color:#3d4c6b;transform:scaleX(0.9000);transform-origin:50% 0;">Вт<i class="bl"></i></div>
<div class="t" id="t72" style="left:1268.02px;top:329.40px;font-size:13px;line-height:13px;color:#6a6a6a;transform:scaleX(0.9000);transform-origin:50% 0;">26<i class="bl"></i></div>
<div class="t" id="t73" style="left:1309.31px;top:310.50px;font-size:13px;line-height:13px;color:#3d4c6b;transform:scaleX(0.9000);transform-origin:50% 0;">Ср<i class="bl"></i></div>
<div class="t" id="t74" style="left:1310.39px;top:329.40px;font-size:13px;line-height:13px;color:#6a6a6a;transform:scaleX(0.9000);transform-origin:50% 0;">27<i class="bl"></i></div>
<div class="t" id="t75" style="left:1352.68px;top:310.50px;font-size:13px;line-height:13px;color:#3d4c6b;transform:scaleX(0.9000);transform-origin:50% 0;">Чт<i class="bl"></i></div>
<div class="t" id="t76" style="left:1352.76px;top:329.40px;font-size:13px;line-height:13px;color:#6a6a6a;transform:scaleX(0.9000);transform-origin:50% 0;">28<i class="bl"></i></div>
<div class="t" id="t77" style="left:1394.70px;top:310.50px;font-size:13px;line-height:13px;color:#3d4c6b;transform:scaleX(0.9000);transform-origin:50% 0;">Пт<i class="bl"></i></div>
<div class="t" id="t78" style="left:1395.13px;top:329.40px;font-size:13px;line-height:13px;color:#6a6a6a;transform:scaleX(0.9000);transform-origin:50% 0;">29<i class="bl"></i></div>
<div class="t" id="t79" style="left:1436.31px;top:310.50px;font-size:13px;line-height:13px;color:#3d4c6b;transform:scaleX(0.9000);transform-origin:50% 0;">Сб<i class="bl"></i></div>
<div class="t" id="t80" style="left:1437.50px;top:329.40px;font-size:13px;line-height:13px;color:#6a6a6a;transform:scaleX(0.9000);transform-origin:50% 0;">30<i class="bl"></i></div>
<div class="t" id="t81" style="left:1479.51px;top:310.50px;font-size:13px;line-height:13px;color:#3d4c6b;transform:scaleX(0.9000);transform-origin:50% 0;">Вс<i class="bl"></i></div>
<div class="t" id="t82" style="left:1479.87px;top:329.40px;font-size:13px;line-height:13px;color:#6a6a6a;transform:scaleX(0.9000);transform-origin:50% 0;">31<i class="bl"></i></div>
<div class="t" id="t83" style="left:1518.30px;top:178.30px;font-size:12px;line-height:12px;color:#555;transform:scaleX(0.9585);transform-origin:0 0;">160<i class="bl"></i></div>
<div class="t" id="t84" style="left:1517.10px;top:296.20px;font-size:12px;line-height:12px;color:#555;transform:scaleX(1.0697);transform-origin:0 0;">0 ч<i class="bl"></i></div>
<div class="t" id="t85" style="left:207.80px;top:390.20px;font-size:23px;line-height:23px;color:#ffffff;transform:scaleX(0.8915);transform-origin:0 0;">2 949 ч<i class="bl"></i></div>
<div class="t" id="t86" style="left:207.80px;top:421.20px;font-size:16px;line-height:16px;color:#ffffff;font-weight:700;-webkit-text-stroke:0;transform:scaleX(0.8365);transform-origin:0 0;">ОТРАБОТАННОЕ<i class="bl"></i></div>
<div class="t" id="t87" style="left:449.88px;top:401.60px;font-size:23px;line-height:23px;color:#ffffff;transform:scaleX(0.8985);transform-origin:100% 0;">91.3%<i class="bl"></i></div>
<div class="t" id="t88" style="left:547.90px;top:390.20px;font-size:23px;line-height:23px;color:#ffffff;transform:scaleX(0.9093);transform-origin:0 0;">259 ч<i class="bl"></i></div>
<div class="t" id="t89" style="left:547.90px;top:421.20px;font-size:16px;line-height:16px;color:#ffffff;font-weight:700;-webkit-text-stroke:0;transform:scaleX(0.8412);transform-origin:0 0;">ОТВЛЕЧЕНИЯ<i class="bl"></i></div>
<div class="t" id="t90" style="left:789.88px;top:401.60px;font-size:23px;line-height:23px;color:#ffffff;transform:scaleX(0.8939);transform-origin:100% 0;">8.80%<i class="bl"></i></div>
<div class="t" id="t91" style="left:889.70px;top:390.20px;font-size:23px;line-height:23px;color:#ffffff;transform:scaleX(0.8823);transform-origin:0 0;">1 979 ч<i class="bl"></i></div>
<div class="t" id="t92" style="left:889.70px;top:421.20px;font-size:16px;line-height:16px;color:#ffffff;font-weight:700;-webkit-text-stroke:0;transform:scaleX(0.8335);transform-origin:0 0;">ПРОДУКТИВНОЕ<i class="bl"></i></div>
<div class="t" id="t93" style="left:1129.28px;top:401.60px;font-size:23px;line-height:23px;color:#ffffff;transform:scaleX(0.9046);transform-origin:100% 0;">67.1%<i class="bl"></i></div>
<div class="t" id="t94" style="left:1228.10px;top:390.20px;font-size:23px;line-height:23px;color:#ffffff;transform:scaleX(0.8740);transform-origin:0 0;">710 ч<i class="bl"></i></div>
<div class="t" id="t95" style="left:1228.10px;top:421.20px;font-size:16px;line-height:16px;color:#ffffff;font-weight:700;-webkit-text-stroke:0;transform:scaleX(0.8175);transform-origin:0 0;">БЕЗ КОМПЬЮТЕРА<i class="bl"></i></div>
<div class="t" id="t96" style="left:1467.98px;top:401.60px;font-size:23px;line-height:23px;color:#ffffff;transform:scaleX(0.9062);transform-origin:100% 0;">24.1%<i class="bl"></i></div>
<div class="t" id="t97" style="left:253.50px;top:513.30px;font-size:16px;line-height:16px;color:#2f4260;transform:scaleX(0.9327);transform-origin:0 0;">Сотрудник<i class="bl"></i></div>
<div class="t" id="t98" style="left:535.90px;top:513.30px;font-size:16px;line-height:16px;color:#2f4260;transform:scaleX(0.9083);transform-origin:0 0;">Отработанное<i class="bl"></i></div>
<div class="t" id="t99" style="left:958.82px;top:513.30px;font-size:16px;line-height:16px;color:#2f4260;transform:scaleX(0.8943);transform-origin:100% 0;">Переработка<i class="bl"></i></div>
<div class="t" id="t100" style="left:1126.92px;top:513.30px;font-size:16px;line-height:16px;color:#2f4260;transform:scaleX(0.9039);transform-origin:100% 0;">Отвлечения<i class="bl"></i></div>
<div class="t" id="t101" style="left:1272.04px;top:513.30px;font-size:16px;line-height:16px;color:#2f4260;transform:scaleX(0.9222);transform-origin:100% 0;">Продуктивное<i class="bl"></i></div>
<div class="t" id="t102" style="left:1417.99px;top:513.30px;font-size:16px;line-height:16px;color:#2f4260;transform:scaleX(0.9219);transform-origin:100% 0;">Без компьютера<i class="bl"></i></div>
<div class="t" id="t103" style="left:282.90px;top:568.20px;font-size:16px;line-height:16px;color:#1c1c1c;transform:scaleX(0.9209);transform-origin:0 0;-webkit-text-stroke:0.45px #1c1c1c;">Финансовый отдел<i class="bl"></i></div>
<div class="t" id="t104" style="left:582.72px;top:568.20px;font-size:16px;line-height:16px;color:#1a1a1a;-webkit-text-stroke:0.65px currentColor;transform:scaleX(0.9320);transform-origin:100% 0;">808 ч<i class="bl"></i></div>
<div class="t" id="t105" style="left:820.50px;top:568.20px;font-size:16px;line-height:16px;color:#7d7d7d;transform:scaleX(0.8602);transform-origin:0 0;">100%<i class="bl"></i></div>
<div class="t" id="t106" style="left:931.86px;top:568.20px;font-size:16px;line-height:16px;color:#1a1a1a;-webkit-text-stroke:0.65px currentColor;transform:scaleX(0.9489);transform-origin:100% 0;">+ 2 сек <span style="font-weight:400;color:#828282;-webkit-text-stroke:0.3px #828282">(от 808 ч)</span><i class="bl"></i></div>
<div class="t" id="t107" style="left:1071.58px;top:568.20px;font-size:16px;line-height:16px;color:#1a1a1a;-webkit-text-stroke:0.65px currentColor;transform:scaleX(0.9344);transform-origin:100% 0;">54 ч 50 мин <span style="font-weight:400;color:#828282;-webkit-text-stroke:0.3px #828282">(6.79%)</span><i class="bl"></i></div>
<div class="t" id="t108" style="left:1278.75px;top:568.20px;font-size:16px;line-height:16px;color:#1a1a1a;-webkit-text-stroke:0.65px currentColor;transform:scaleX(0.9384);transform-origin:100% 0;">577 ч <span style="font-weight:400;color:#828282;-webkit-text-stroke:0.3px #828282">(71.5%)</span><i class="bl"></i></div>
<div class="t" id="t109" style="left:1438.75px;top:568.20px;font-size:16px;line-height:16px;color:#1a1a1a;-webkit-text-stroke:0.65px currentColor;transform:scaleX(0.9204);transform-origin:100% 0;">175 ч <span style="font-weight:400;color:#828282;-webkit-text-stroke:0.3px #828282">(21.8%)</span><i class="bl"></i></div>
<div class="t" id="t110" style="left:282.90px;top:636.10px;font-size:16px;line-height:16px;color:#1c1c1c;transform:scaleX(0.9331);transform-origin:0 0;-webkit-text-stroke:0.45px #1c1c1c;">Отдел продаж<i class="bl"></i></div>
<div class="t" id="t111" style="left:582.72px;top:636.10px;font-size:16px;line-height:16px;color:#1a1a1a;-webkit-text-stroke:0.65px currentColor;transform:scaleX(0.9320);transform-origin:100% 0;">643 ч<i class="bl"></i></div>
<div class="t" id="t112" style="left:820.50px;top:636.10px;font-size:16px;line-height:16px;color:#7d7d7d;transform:scaleX(0.9102);transform-origin:0 0;">81.3%<i class="bl"></i></div>
<div class="t" id="t113" style="left:933.64px;top:636.10px;font-size:16px;line-height:16px;color:#1a1a1a;-webkit-text-stroke:0.65px currentColor;transform:scaleX(0.9327);transform-origin:100% 0;">- 147 ч <span style="font-weight:400;color:#828282;-webkit-text-stroke:0.3px #828282">(от 791 ч)</span><i class="bl"></i></div>
<div class="t" id="t114" style="left:1071.58px;top:636.10px;font-size:16px;line-height:16px;color:#1a1a1a;-webkit-text-stroke:0.65px currentColor;transform:scaleX(0.9351);transform-origin:100% 0;">96 ч 05 мин <span style="font-weight:400;color:#828282;-webkit-text-stroke:0.3px #828282">(14.9%)</span><i class="bl"></i></div>
<div class="t" id="t115" style="left:1278.75px;top:636.10px;font-size:16px;line-height:16px;color:#1a1a1a;-webkit-text-stroke:0.65px currentColor;transform:scaleX(0.9374);transform-origin:100% 0;">380 ч <span style="font-weight:400;color:#828282;-webkit-text-stroke:0.3px #828282">(59.1%)</span><i class="bl"></i></div>
<div class="t" id="t116" style="left:1438.75px;top:636.10px;font-size:16px;line-height:16px;color:#1a1a1a;-webkit-text-stroke:0.65px currentColor;transform:scaleX(0.9244);transform-origin:100% 0;">166 ч <span style="font-weight:400;color:#828282;-webkit-text-stroke:0.3px #828282">(26.0%)</span><i class="bl"></i></div>
<div class="t" id="t117" style="left:282.90px;top:701.50px;font-size:16px;line-height:16px;color:#1c1c1c;transform:scaleX(0.9229);transform-origin:0 0;-webkit-text-stroke:0.45px #1c1c1c;">Административный отдел<i class="bl"></i></div>
<div class="t" id="t118" style="left:582.72px;top:701.50px;font-size:16px;line-height:16px;color:#1a1a1a;-webkit-text-stroke:0.65px currentColor;transform:scaleX(0.9320);transform-origin:100% 0;">642 ч<i class="bl"></i></div>
<div class="t" id="t119" style="left:820.50px;top:701.50px;font-size:16px;line-height:16px;color:#7d7d7d;transform:scaleX(0.9102);transform-origin:0 0;">98.6%<i class="bl"></i></div>
<div class="t" id="t120" style="left:895.99px;top:701.50px;font-size:16px;line-height:16px;color:#1a1a1a;-webkit-text-stroke:0.65px currentColor;transform:scaleX(0.9338);transform-origin:100% 0;">- 9 ч 07 мин <span style="font-weight:400;color:#828282;-webkit-text-stroke:0.3px #828282">(от 652 ч)</span><i class="bl"></i></div>
<div class="t" id="t121" style="left:1080.47px;top:701.50px;font-size:16px;line-height:16px;color:#1a1a1a;-webkit-text-stroke:0.65px currentColor;transform:scaleX(0.9395);transform-origin:100% 0;">7 ч 09 мин <span style="font-weight:400;color:#828282;-webkit-text-stroke:0.3px #828282">(1.12%)</span><i class="bl"></i></div>
<div class="t" id="t122" style="left:1278.75px;top:701.50px;font-size:16px;line-height:16px;color:#1a1a1a;-webkit-text-stroke:0.65px currentColor;transform:scaleX(0.9374);transform-origin:100% 0;">432 ч <span style="font-weight:400;color:#828282;-webkit-text-stroke:0.3px #828282">(67.2%)</span><i class="bl"></i></div>
<div class="t" id="t123" style="left:1438.75px;top:701.50px;font-size:16px;line-height:16px;color:#1a1a1a;-webkit-text-stroke:0.65px currentColor;transform:scaleX(0.9374);transform-origin:100% 0;">203 ч <span style="font-weight:400;color:#828282;-webkit-text-stroke:0.3px #828282">(31.7%)</span><i class="bl"></i></div>
<div class="t" id="t124" style="left:282.90px;top:767.30px;font-size:16px;line-height:16px;color:#1c1c1c;transform:scaleX(0.9251);transform-origin:0 0;-webkit-text-stroke:0.45px #1c1c1c;">HR отдел<i class="bl"></i></div>
<div class="t" id="t125" style="left:582.72px;top:767.30px;font-size:16px;line-height:16px;color:#1a1a1a;-webkit-text-stroke:0.65px currentColor;transform:scaleX(0.9320);transform-origin:100% 0;">288 ч<i class="bl"></i></div>
<div class="t" id="t126" style="left:820.50px;top:767.30px;font-size:16px;line-height:16px;color:#7d7d7d;transform:scaleX(0.9102);transform-origin:0 0;">88.5%<i class="bl"></i></div>
<div class="t" id="t127" style="left:887.08px;top:767.30px;font-size:16px;line-height:16px;color:#1a1a1a;-webkit-text-stroke:0.65px currentColor;transform:scaleX(0.9290);transform-origin:100% 0;">- 37 ч 27 мин <span style="font-weight:400;color:#828282;-webkit-text-stroke:0.3px #828282">(от 326 ч)</span><i class="bl"></i></div>
<div class="t" id="t128" style="left:1111.47px;top:767.30px;font-size:16px;line-height:16px;color:#1a1a1a;-webkit-text-stroke:0.65px currentColor;transform:scaleX(0.9351);transform-origin:100% 0;">15 сек <span style="font-weight:400;color:#828282;-webkit-text-stroke:0.3px #828282">(0.00%)</span><i class="bl"></i></div>
<div class="t" id="t129" style="left:1278.75px;top:767.30px;font-size:16px;line-height:16px;color:#1a1a1a;-webkit-text-stroke:0.65px currentColor;transform:scaleX(0.9374);transform-origin:100% 0;">223 ч <span style="font-weight:400;color:#828282;-webkit-text-stroke:0.3px #828282">(77.3%)</span><i class="bl"></i></div>
<div class="t" id="t130" style="left:1392.18px;top:767.30px;font-size:16px;line-height:16px;color:#1a1a1a;-webkit-text-stroke:0.65px currentColor;transform:scaleX(0.9412);transform-origin:100% 0;">65 ч 28 мин <span style="font-weight:400;color:#828282;-webkit-text-stroke:0.3px #828282">(22.7%)</span><i class="bl"></i></div>
<div class="t" id="t131" style="left:282.90px;top:832.40px;font-size:16px;line-height:16px;color:#1c1c1c;transform:scaleX(0.9137);transform-origin:0 0;-webkit-text-stroke:0.45px #1c1c1c;">Проектный отдел<i class="bl"></i></div>
<div class="t" id="t132" style="left:582.72px;top:832.40px;font-size:16px;line-height:16px;color:#1a1a1a;-webkit-text-stroke:0.65px currentColor;transform:scaleX(0.9320);transform-origin:100% 0;">238 ч<i class="bl"></i></div>
<div class="t" id="t133" style="left:820.50px;top:832.40px;font-size:16px;line-height:16px;color:#7d7d7d;transform:scaleX(0.9102);transform-origin:0 0;">73.2%<i class="bl"></i></div>
<div class="t" id="t134" style="left:887.08px;top:832.40px;font-size:16px;line-height:16px;color:#1a1a1a;-webkit-text-stroke:0.65px currentColor;transform:scaleX(0.9290);transform-origin:100% 0;">- 87 ч 26 мин <span style="font-weight:400;color:#828282;-webkit-text-stroke:0.3px #828282">(от 326 ч)</span><i class="bl"></i></div>
<div class="t" id="t135" style="left:1071.58px;top:832.40px;font-size:16px;line-height:16px;color:#1a1a1a;-webkit-text-stroke:0.65px currentColor;transform:scaleX(0.9371);transform-origin:100% 0;">31 ч 33 мин <span style="font-weight:400;color:#828282;-webkit-text-stroke:0.3px #828282">(13.2%)</span><i class="bl"></i></div>
<div class="t" id="t136" style="left:1278.75px;top:832.40px;font-size:16px;line-height:16px;color:#1a1a1a;-webkit-text-stroke:0.65px currentColor;transform:scaleX(0.9374);transform-origin:100% 0;">181 ч <span style="font-weight:400;color:#828282;-webkit-text-stroke:0.3px #828282">(76.2%)</span><i class="bl"></i></div>
<div class="t" id="t137" style="left:1392.18px;top:832.40px;font-size:16px;line-height:16px;color:#1a1a1a;-webkit-text-stroke:0.65px currentColor;transform:scaleX(0.9412);transform-origin:100% 0;">25 ч 16 мин <span style="font-weight:400;color:#828282;-webkit-text-stroke:0.3px #828282">(10.6%)</span><i class="bl"></i></div>
</body></html>
